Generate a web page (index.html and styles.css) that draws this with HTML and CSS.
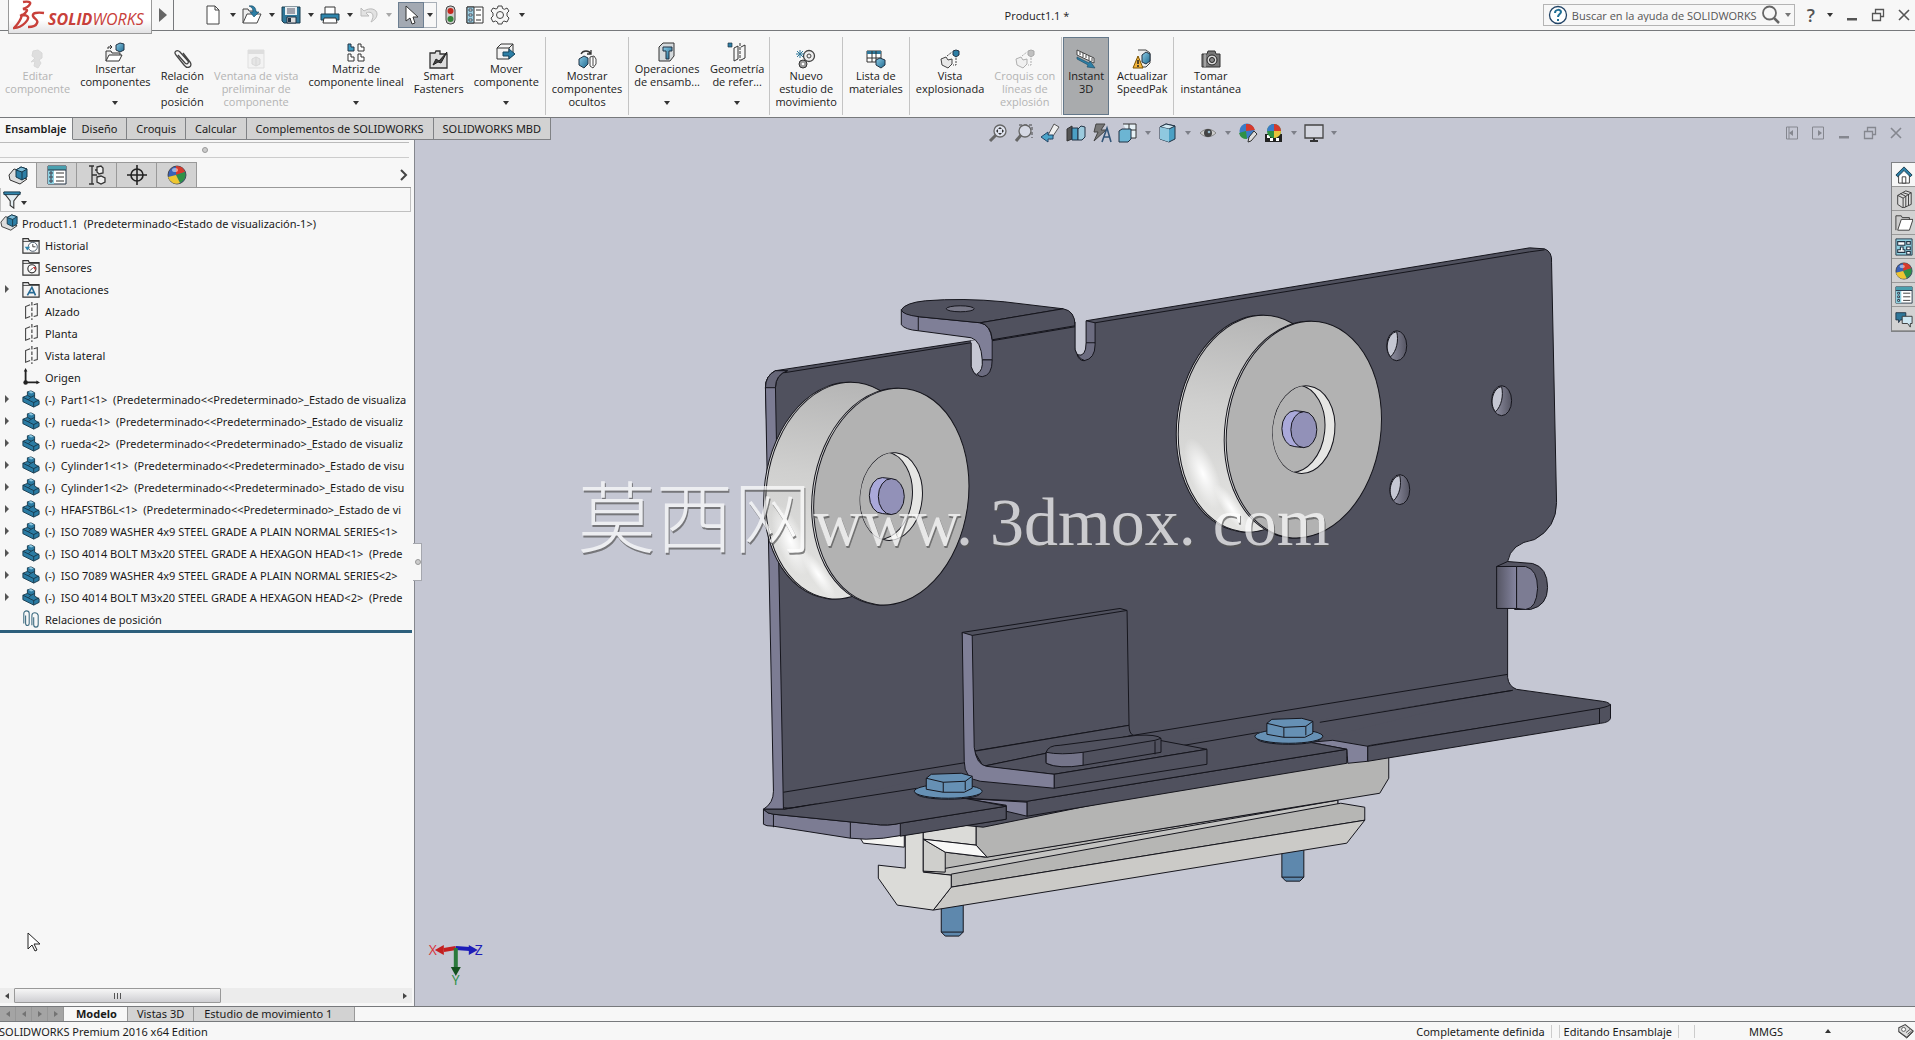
FILE: index.html
```html
<!DOCTYPE html>
<html lang="es">
<head>
    <meta charset="UTF-8">
    <meta name="viewport" content="width=device-width, initial-scale=1.0">
    <title>Product1.1 *</title>
    <link rel="stylesheet" href="styles.css">
</head>
<body>
    <svg class="sprite" width="0" height="0" aria-hidden="true">
        <defs>
            <linearGradient id="g-blue" x1="0" y1="0" x2="1" y2="1">
                <stop offset="0" stop-color="#8ccbe6"/><stop offset="1" stop-color="#1f6a90"/>
            </linearGradient>
            <symbol id="i-new" viewBox="0 0 20 20">
                <path d="M4 1h8l4 4v14H4z" fill="#fff" stroke="#444"/><path d="M12 1v4h4" fill="none" stroke="#444"/>
            </symbol>
            <symbol id="i-open" viewBox="0 0 20 20">
                <path d="M1 18V4h5l1 2h7v3" fill="#eee" stroke="#444"/><path d="M1 18l4-9h14l-4 9z" fill="#fff" stroke="#444"/>
                <path d="M7 1c5-1 7 2 7 6h3l-5 5-4-5h3c0-3-1-5-4-6z" fill="#2d7fa6" stroke="#17475f" stroke-width=".6"/>
            </symbol>
            <symbol id="i-save" viewBox="0 0 20 20">
                <path d="M1 2h18v16H3l-2-2z" fill="#2f7799" stroke="#1b3d4f"/><path d="M4 2h12v8H4z" fill="#e8eef1"/>
                <path d="M6 4h8M6 6h8M6 8h8" stroke="#556"/><path d="M6 12h9v6H6z" fill="#ddd" stroke="#234"/><path d="M7 13h3v4H7z" fill="#234"/>
            </symbol>
            <symbol id="i-print" viewBox="0 0 20 20">
                <path d="M5 9V2h10v7" fill="#fff" stroke="#333"/><path d="M1 9h18v6H1z" fill="#2f86ad" stroke="#1b3d4f"/>
                <path d="M4 13h12l1 5H3z" fill="#fff" stroke="#333"/>
            </symbol>
            <symbol id="i-undo" viewBox="0 0 20 20">
                <path d="M2 3v8h8L7 8c4-2 7 0 7 3 0 2-1 4-2 6 4-2 6-5 6-8 0-5-7-7-13-3z" fill="#e2e2e2" stroke="#bbb"/>
            </symbol>
            <symbol id="i-cursor" viewBox="0 0 20 20">
                <path d="M5 1v15l4-3 2 6 3-1-2-6h5z" fill="#fff" stroke="#333"/>
            </symbol>
            <symbol id="i-traffic" viewBox="0 0 20 20">
                <rect x="6" y="1" width="9" height="18" rx="4" fill="#ccc" stroke="#444"/><circle cx="10.500" cy="6" r="3" fill="#c4281e"/><circle cx="10.500" cy="14" r="3" fill="#35843a"/>
            </symbol>
            <symbol id="i-props" viewBox="0 0 20 20">
                <path d="M2 2h16v16H2z" fill="#fff" stroke="#333"/><path d="M2 2h7v16H2z" fill="#9fd0e4" stroke="#333"/>
                <path d="M4 4h3v2H4zM4 9h3v2H4zM4 14h3v2H4z" fill="#fff" stroke="#234" stroke-width=".8"/><path d="M11 5h5M11 10h5M11 15h5" stroke="#333"/>
            </symbol>
            <symbol id="i-gear" viewBox="0 0 20 20">
                <path d="M8 1h4l.5 2.500 2 .8L17 3l2 3-2 2v3l2 2-2 4-3-1-1.500 1L12 19H8l-.5-2-2-1L3 17l-2-4 2-2V8L1 6l2-3 3 1 1.500-.8z" fill="#f7f7f7" stroke="#444"/>
                <circle cx="10" cy="10" r="3.500" fill="none" stroke="#444"/>
            </symbol>
            <symbol id="i-help" viewBox="0 0 20 20">
                <circle cx="10" cy="10" r="8.500" fill="#fff" stroke="#246" stroke-width="1.300"/>
                <path d="M7 8c0-4 6-4 6-1 0 2-3 2-3 5M10 14v2" fill="none" stroke="#1f6f95" stroke-width="2"/>
            </symbol>
            <symbol id="i-search" viewBox="0 0 20 20">
                <circle cx="8.500" cy="8" r="6.500" fill="none" stroke="#666" stroke-width="1.800"/><path d="M13 13l5 5" stroke="#666" stroke-width="2.500"/>
            </symbol>
            <symbol id="i-min" viewBox="0 0 14 14"><path d="M2 10h10v2.500H2z" fill="currentColor"/></symbol>
            <symbol id="i-restore" viewBox="0 0 14 14">
                <path d="M4.500 5V1.500h8v7H9M1.500 5.500h8v7h-8z" fill="none" stroke="currentColor" stroke-width="1.300"/>
            </symbol>
            <symbol id="i-close" viewBox="0 0 14 14"><path d="M2 2l10 10M12 2L2 12" stroke="currentColor" stroke-width="1.600"/></symbol>
            <symbol id="i-paneleft" viewBox="0 0 14 14"><path d="M1.500 1h11v12h-11zM4 1v12" fill="none" stroke="currentColor"/><path d="M4 7l4-3v6z" fill="currentColor"/></symbol>
            <symbol id="i-paneright" viewBox="0 0 14 14"><path d="M1.500 1h11v12h-11z" fill="none" stroke="currentColor"/><path d="M11 7L7 4v6z" fill="currentColor"/></symbol>

            <symbol id="i-edit" viewBox="0 0 20 20">
                <path d="M5 2l5-1 4 3v5l-3 2 2 3-3 5-4-2 1-5-4 1 4-4-3-2z" fill="#bbb" stroke="#aaa"/>
            </symbol>
            <symbol id="i-insert" viewBox="0 0 20 20">
                <path d="M1 19V9h5l1 2h8v3" fill="#eee" stroke="#333"/><path d="M1 19l3-6h13l-3 6z" fill="#fff" stroke="#333"/>
                <path d="M11 3l4-2 4 1v6l-4 2-4-2z" fill="url(#g-blue)" stroke="#234"/><path d="M3 7V5h4M5 3l2 2-2 2" fill="none" stroke="#333"/>
            </symbol>
            <symbol id="i-clip" viewBox="0 0 20 20">
                <path d="M6 6l7 8c2 2 4 0 3-2L8 3C5 0 1 3 4 6l8 10c4 5 9 1 6-3L11 4" fill="none" stroke="#444" stroke-width="1.300"/>
            </symbol>
            <symbol id="i-window" viewBox="0 0 20 20">
                <path d="M2 1h16v18H2z" fill="#eee" stroke="#bbb"/><path d="M2 1h16v4H2z" fill="#bbb"/><path d="M6 10l4-2 4 2v5l-4 2-4-2zM10 8v9" fill="#ccc" stroke="#aaa"/>
            </symbol>
            <symbol id="i-pattern" viewBox="0 0 20 20">
                <path d="M2 2h3v3h3v4H2z" fill="#3f9dc4" stroke="#234"/>
                <path d="M12 2h3v3h3v4h-6zM2 12h3v3h3v4H2zM12 12h3v3h3v4h-6z" fill="#fff" stroke="#333"/>
            </symbol>
            <symbol id="i-smart" viewBox="0 0 20 20">
                <path d="M1 19V4h5l1-2h4v3h7v14z" fill="#ddd" stroke="#333" stroke-width="1.300"/><path d="M4 16l3-6 3 2 8-9-6 11-3-1z" fill="#444" stroke="#222"/>
            </symbol>
            <symbol id="i-move" viewBox="0 0 20 20">
                <path d="M1 6l4-4h12v11l-4 4H1z" fill="#f4f4f4" stroke="#333"/><path d="M1 6h12v11M13 6l4-4" fill="none" stroke="#333"/>
                <path d="M7 10h6V7l6 5-6 5v-3H7z" fill="#2d7fa6" stroke="#17475f"/>
            </symbol>
            <symbol id="i-show" viewBox="0 0 20 20">
                <path d="M4 5c2-4 8-4 10 0M14 1v4h-4" fill="none" stroke="#333" stroke-width="1.300"/>
                <path d="M2 10l5-3 4 2v6l-4 4-5-3z" fill="url(#g-blue)" stroke="#234"/><path d="M13 8l4-1 2 3v5l-3 4-3-2zM16 8v9" fill="#fff" stroke="#444"/>
            </symbol>
            <symbol id="i-ops" viewBox="0 0 20 20">
                <path d="M2 5l4-4h11v13l-4 5H2z" fill="#d5dadd" stroke="#333"/><path d="M6 5h9v4h-3v8H9V9H6z" fill="url(#g-blue)" stroke="#234"/>
            </symbol>
            <symbol id="i-geom" viewBox="0 0 20 20">
                <path d="M1 1h4v4H1z" fill="#2d7fa6" stroke="#234" stroke-width=".7"/><path d="M7 6l4-2v13l-4 2zM14 5l4-2v13l-4 2" fill="none" stroke="#333"/><path d="M13 1v18" stroke="#333" stroke-dasharray="3 1"/>
            </symbol>
            <symbol id="i-motion" viewBox="0 0 20 20">
                <circle cx="13" cy="7" r="5.500" fill="#eee" stroke="#444" stroke-width="1.300"/><circle cx="13" cy="7" r="2" fill="none" stroke="#444"/>
                <circle cx="7" cy="15" r="4" fill="#999" stroke="#333"/><circle cx="7" cy="15" r="1.300" fill="#fff"/><path d="M4 1v8M0 5h8M1 2l6 6M7 2L1 8" stroke="#2f7799"/>
            </symbol>
            <symbol id="i-list" viewBox="0 0 20 20">
                <path d="M1 2h14v11H1z" fill="#fff" stroke="#333"/><path d="M1 2h14v3H1z" fill="#2f7799"/><path d="M1 9h14M6 2v11M10 2v11" stroke="#333"/>
                <path d="M10 11l4-2 5 2v5l-4 3-5-3z" fill="url(#g-blue)" stroke="#234"/>
            </symbol>
            <symbol id="i-explode" viewBox="0 0 20 20">
                <path d="M1 10l5-2 2 3 4-1v5l-4 4-6-3z" fill="#e8e8e8" stroke="#444"/><path d="M13 2l3-1 3 1v4l-3 2-3-2z" fill="#2d7fa6" stroke="#234"/>
                <path d="M16 9v7h-3M7 7l5-4" fill="none" stroke="#444" stroke-dasharray="2 1"/>
            </symbol>
            <symbol id="i-instant" viewBox="0 0 20 20">
                <path d="M1 1l17 8v5L1 6z" fill="#fff" stroke="#444"/><path d="M4 3v3M7 4v4M10 6v3M13 7v4M16 9v3" stroke="#444"/>
                <path d="M1 8l12 6 1-2 5 7-8-1 1-2L1 10z" fill="#2d7fa6" stroke="#17475f" stroke-width=".6"/>
            </symbol>
            <symbol id="i-speed" viewBox="0 0 20 20">
                <path d="M6 1h8l4 3v10l-4 4H9" fill="#eee" stroke="#444"/><path d="M10 6l4-3 4 2v7l-4 3-4-2z" fill="url(#g-blue)" stroke="#234"/>
                <path d="M6 7l5 12H1z" fill="#f4b53c" stroke="#7a5200"/><path d="M6 11v4M6 16v2" stroke="#222" stroke-width="1.500"/>
            </symbol>
            <symbol id="i-camera" viewBox="0 0 20 20">
                <path d="M1 5h5l1-3h7l1 3h4v13H1z" fill="#777" stroke="#333"/><circle cx="11" cy="11" r="5" fill="#ddd" stroke="#222"/><circle cx="11" cy="11" r="2.500" fill="#888" stroke="#222"/><path d="M4 5v13" stroke="#ccc"/>
            </symbol>

            <symbol id="i-zoomfit" viewBox="0 0 20 20">
                <path d="M8 12l-6 6" stroke="#666" stroke-width="3"/><circle cx="12" cy="8" r="6" fill="#dfe3ee" stroke="#666" stroke-width="1.300"/><path d="M12 4l2 2h-4zM12 12l2-2h-4zM8 8l2-2v4zM16 8l-2-2v4z" fill="#333"/>
            </symbol>
            <symbol id="i-zoomarea" viewBox="0 0 20 20">
                <path d="M5 2h13v13" fill="none" stroke="#444" stroke-dasharray="3 2"/><circle cx="11" cy="8" r="6" fill="#d6d9e4" stroke="#666" stroke-width="1.300"/><path d="M7 12l-5 6" stroke="#666" stroke-width="3"/>
            </symbol>
            <symbol id="i-prev" viewBox="0 0 20 20">
                <path d="M14 1l5 3-8 12-4-2z" fill="#eee" stroke="#555"/><path d="M1 14l7-5v3h5v4H8v3z" fill="#4aa3c9" stroke="#246"/>
            </symbol>
            <symbol id="i-section" viewBox="0 0 20 20">
                <path d="M1 6l5-3v13l-5 2z" fill="#555" stroke="#333"/><path d="M6 5h6v12H6z" fill="#4ba0c4" stroke="#234"/><path d="M12 6l3-3 4 1v10l-3 3h-4z" fill="#9ccadd" stroke="#234"/>
            </symbol>
            <symbol id="i-dynamic" viewBox="0 0 20 20">
                <path d="M4 1h9L9 7h5L2 18l4-9H2z" fill="#777" stroke="#444"/><path d="M10 19l5-14 4 14M12 14h6" fill="none" stroke="#357" stroke-width="1.600"/>
            </symbol>
            <symbol id="i-orient" viewBox="0 0 20 20">
                <path d="M5 1h13v14h-5M11 1v6M5 7h13" fill="#e6f1f6" stroke="#333"/><path d="M1 8l3-2h9v10l-3 3H1z" fill="#6cb5d3" stroke="#234"/>
            </symbol>
            <symbol id="i-style" viewBox="0 0 20 20">
                <path d="M2 4l6-3 9 2v13l-6 3-9-3z" fill="#4ba0c4" stroke="#234"/><path d="M2 4l9 2 6-3-9-2z" fill="#cfe8f2" stroke="#234"/><path d="M2 4l9 2v13l-9-3z" fill="#8fc8df"/>
            </symbol>
            <symbol id="i-eye" viewBox="0 0 20 20">
                <path d="M2 10c5-5 11-5 16 0-5 5-11 5-16 0z" fill="#ccc" stroke="#888"/><circle cx="10" cy="10" r="4" fill="#444"/><circle cx="11" cy="9" r="1.300" fill="#9bc"/>
            </symbol>
            <symbol id="i-ball" viewBox="0 0 20 20">
                <circle cx="10" cy="10" r="9" fill="#3a62b8" stroke="#333" stroke-width=".8"/><path d="M9 10V1a9 9 0 0 1 9 6z" fill="#d63a2c"/>
                <path d="M9 10l9-3a9 9 0 0 1-5 11z" fill="#2f9145"/><path d="M9 10l4 8a9 9 0 0 1-12-6z" fill="#eec631"/><ellipse cx="8" cy="5" rx="3" ry="2" fill="#fff" opacity=".5"/>
            </symbol>
            <symbol id="i-ballpen" viewBox="0 0 20 20">
                <circle cx="9" cy="8" r="7.500" fill="#3a7cc8"/><path d="M8 8V1a8 8 0 0 1 9 6z" fill="#d63a2c"/><path d="M8 8l-7 2a8 8 0 0 0 8 6z" fill="#2f9145"/><path d="M11 14l5-6 3 3-6 7-3 1z" fill="#ddd" stroke="#333"/>
            </symbol>
            <symbol id="i-scene" viewBox="0 0 20 20">
                <path d="M1 11h17v8H1z" fill="#222"/><path d="M3 12h3v3H3zM6 15h3v3H6zM12 15h3v3h-3z" fill="#fff"/>
                <circle cx="10" cy="8" r="7" fill="#2f9145"/><path d="M10 8V1a7 7 0 0 1 7 7z" fill="#d63a2c"/><path d="M10 8h7a7 7 0 0 1-7 7z" fill="#e8c23a"/><path d="M10 8V1a7 7 0 0 0-7 7z" fill="#3a7cc8"/>
            </symbol>
            <symbol id="i-monitor" viewBox="0 0 20 20">
                <path d="M1 2h18v13H1z" fill="#d4d6df" stroke="#444" stroke-width="1.300"/><path d="M10 15v3M6 18h8" stroke="#333" stroke-width="2"/>
            </symbol>

            <symbol id="i-asm" viewBox="0 0 20 20">
                <path d="M1 9l5-6 4 1v6l9 3-7 5-10-4z" fill="#ddd" stroke="#333"/><path d="M8 4l5-3 6 2v8l-5 3-6-3z" fill="#2d7fa6" stroke="#17384a"/><path d="M8 4l6 2 5-3-6-2z" fill="#7dbcd8" stroke="#17384a"/><path d="M14 6v8" stroke="#17384a"/>
            </symbol>
            <symbol id="i-config" viewBox="0 0 20 20">
                <path d="M5 1v18M2 1h5M2 19h5M5 10h5M8 5h4" fill="none" stroke="#333" stroke-width="1.300"/>
                <path d="M10 2l4-1 2 2v5l-4 1-2-2zM10 12l4-1 4 2v4l-4 2-4-2z" fill="#eee" stroke="#333" stroke-width="1.300"/>
            </symbol>
            <symbol id="i-target" viewBox="0 0 20 20">
                <circle cx="10" cy="10" r="6" fill="none" stroke="#222" stroke-width="1.600"/><path d="M10 0v20M0 10h20" stroke="#222" stroke-width="1.600"/>
            </symbol>
            <symbol id="i-funnel" viewBox="0 0 20 20">
                <path d="M1 2h18l-7 9v8l-4-3v-5z" fill="#e4eef2" stroke="#333" stroke-width="1.200"/><path d="M1 1h18v3H1z" fill="#2f86ad" stroke="#17384a"/>
            </symbol>
            <symbol id="i-folder" viewBox="0 0 20 20">
                <path d="M1 19V3h6l1 2h11v14z" fill="#f4f4f4" stroke="#333" stroke-width="1.300"/><path d="M1 6h18" stroke="#333"/>
            </symbol>
            <symbol id="i-history" viewBox="0 0 20 20">
                <use href="#i-folder"/><circle cx="12" cy="12" r="5" fill="#fff" stroke="#456"/><path d="M12 9v3h3" fill="none" stroke="#333"/><path d="M3 12h6l-3 4z" fill="#2f86ad"/>
            </symbol>
            <symbol id="i-sensor" viewBox="0 0 20 20">
                <use href="#i-folder"/><circle cx="11" cy="12" r="4.500" fill="#fff" stroke="#333" stroke-width="1.300"/><path d="M9 14l3-3" stroke="#333"/><path d="M12 10h3v4z" fill="#c33"/>
            </symbol>
            <symbol id="i-annot" viewBox="0 0 20 20">
                <use href="#i-folder"/><path d="M6 17l5-9 4 9M8 14h6" fill="none" stroke="#276a94" stroke-width="1.800"/>
            </symbol>
            <symbol id="i-plane" viewBox="0 0 20 20">
                <path d="M9 3L4 5v13l5-2M13 3l4-1v13l-4 1" fill="none" stroke="#444" stroke-width="1.200"/><path d="M11 0v20" stroke="#333" stroke-width="1.200" stroke-dasharray="4 2"/>
            </symbol>
            <symbol id="i-origin" viewBox="0 0 20 20">
                <path d="M4 3v13h13" fill="none" stroke="#222" stroke-width="2"/><path d="M4 0l2 4H2zM20 16l-4-2v4z" fill="#222"/><circle cx="4" cy="16" r="2.500" fill="#222"/>
            </symbol>
            <symbol id="i-part" viewBox="0 0 20 20">
                <path d="M1 8l5-2V2l4-1 4 2v6l5 3v4l-6 3-12-6z" fill="#2a7ba3" stroke="#17384a"/><path d="M1 8l6 3 6 3v5M13 14l6-3M6 6l4 2 4-2M7 11l3-3" fill="none" stroke="#17384a"/><path d="M7 2l3-1 3 2-3 1z" fill="#8cc7e0"/>
            </symbol>
            <symbol id="i-mates" viewBox="0 0 20 20">
                <path d="M2 15V4c0-4 6-4 6 0v11c0 3-4 3-4 0V6M11 17V6c0-4 6-4 7 0v10c0 4-5 4-5 0V8" fill="none" stroke="#3d6b80" stroke-width="1.200"/>
            </symbol>
            <symbol id="i-home" viewBox="0 0 20 20">
                <path d="M4 9v10h12V9" fill="#fff" stroke="#333"/><path d="M10 1l9 9-2 2-7-7-7 7-2-2z" fill="#2d7fa6" stroke="#17384a"/><path d="M8 12h4v7H8z" fill="#fff" stroke="#333"/>
            </symbol>
            <symbol id="i-books" viewBox="0 0 20 20">
                <path d="M3 6l9-5 6 2v13l-9 4-6-4zM3 6l6 3 9-6M9 9v11M6 4l6 3v12M9 3l6 2v12" fill="#ddd" stroke="#333"/>
            </symbol>
            <symbol id="i-folderopen" viewBox="0 0 20 20">
                <path d="M1 18V2h6l1 2h8v3" fill="#ccc" stroke="#333"/><path d="M3 18L7 6h13l-4 12z" fill="#fff" stroke="#333"/>
            </symbol>
            <symbol id="i-palette" viewBox="0 0 20 20">
                <path d="M1 1h18v18H1z" fill="#8fd0e0" stroke="#234"/><path d="M3 4h8v4H3zM13 4h4v3h-4zM13 10h4v3h-4zM13 15h4v3h-4zM3 16h8v-3H9v-3H6v3H3z" fill="#fff" stroke="#234" stroke-width="1.200"/>
            </symbol>
            <symbol id="i-form" viewBox="0 0 20 20">
                <path d="M1 1h18v18H1z" fill="#fff" stroke="#234"/><path d="M1 1h18v4H1z" fill="#4a9fae"/><path d="M1 5h6v14H1z" fill="#8fd0e0"/>
                <path d="M3 7h2v2H3zM3 11h2v2H3zM3 15h2v2H3zM1 5h18" fill="#fff" stroke="#234"/><path d="M9 8h8M9 12h8M9 16h8" stroke="#333"/>
            </symbol>
            <symbol id="i-chat" viewBox="0 0 20 20">
                <path d="M1 3h11v8H6l-2 3v-3H1z" fill="#2f7799" stroke="#234"/><path d="M8 7h11v8h-2v4l-3-4H8z" fill="#cfe8f2" stroke="#333"/>
            </symbol>
            <symbol id="i-tag" viewBox="0 0 20 20">
                <path d="M1 6l8-4 10 8-8 8-10-7z" fill="#ddd" stroke="#444" stroke-width="1.300"/><circle cx="7" cy="8" r="2.500" fill="#fff" stroke="#444"/><path d="M10 12l5-4M12 14l5-4M1 11l10 8 8-8" fill="none" stroke="#444"/>
            </symbol>
        </defs>
    </svg>

    <header class="titlebar">
        <div class="logo">
            <svg class="logo-mark" viewBox="0 0 32 30" aria-hidden="true">
                <path d="M10 2c5-1 8 0 7 2-1 2-4 4-7 5 4 0 5 1 3 3-1 2-3 3-6 4M1 28c4-4 7-9 8-13 7 0 8 3 3 8-3 3-7 5-11 5zM31 13c-7-1-12 0-11 3 1 3 6 4 4 7-1 3-5 4-9 4" fill="none" stroke="#c8403a" stroke-width="2.400"/>
            </svg>
            <span class="logo-text"><b>SOLID</b>WORKS</span>
        </div>
        <button class="menu-open" aria-label="Menú"><i class="tri-right"></i></button>
        <div class="quick">
            <button aria-label="Nuevo"><svg class="icon"><use href="#i-new"/></svg></button><button class="more" aria-label="Más"><i class="tri"></i></button>
            <button aria-label="Abrir"><svg class="icon"><use href="#i-open"/></svg></button><button class="more" aria-label="Más"><i class="tri"></i></button>
            <button aria-label="Guardar"><svg class="icon"><use href="#i-save"/></svg></button><button class="more" aria-label="Más"><i class="tri"></i></button>
            <button aria-label="Imprimir"><svg class="icon"><use href="#i-print"/></svg></button><button class="more" aria-label="Más"><i class="tri"></i></button>
            <button aria-label="Deshacer" disabled><svg class="icon"><use href="#i-undo"/></svg></button><button class="more" aria-label="Más" disabled><i class="tri"></i></button>
            <button class="pick" aria-label="Seleccionar"><svg class="icon"><use href="#i-cursor"/></svg></button><button class="pick-more" aria-label="Más"><i class="tri"></i></button>
            <button class="wide" aria-label="Reconstruir"><svg class="icon"><use href="#i-traffic"/></svg></button>
            <button class="wide" aria-label="Propiedades"><svg class="icon"><use href="#i-props"/></svg></button>
            <button class="wide" aria-label="Opciones"><svg class="icon"><use href="#i-gear"/></svg></button><button class="more" aria-label="Más"><i class="tri"></i></button>
        </div>
        <h1 class="doc-title">Product1.1 *</h1>
        <div class="search">
            <svg class="icon"><use href="#i-help"/></svg>
            <input type="text" placeholder="Buscar en la ayuda de SOLIDWORKS" aria-label="Buscar en la ayuda de SOLIDWORKS">
            <button aria-label="Buscar"><svg class="icon"><use href="#i-search"/></svg></button>
            <button aria-label="Más"><i class="tri"></i></button>
        </div>
        <div class="win-controls">
            <button class="help">?</button>
            <button aria-label="Más"><i class="tri"></i></button>
            <button aria-label="Minimizar"><svg class="icon-sm"><use href="#i-min"/></svg></button>
            <button aria-label="Restaurar"><svg class="icon-sm"><use href="#i-restore"/></svg></button>
            <button aria-label="Cerrar"><svg class="icon-sm"><use href="#i-close"/></svg></button>
        </div>
    </header>

    <div class="ribbon">
        <div class="group">
            <button class="cmd" disabled><svg class="icon"><use href="#i-edit"/></svg><span>Editar<br>componente</span></button>
            <button class="cmd drop"><svg class="icon"><use href="#i-insert"/></svg><span>Insertar<br>componentes</span><i class="tri"></i></button>
            <button class="cmd"><svg class="icon"><use href="#i-clip"/></svg><span>Relación<br>de<br>posición</span></button>
            <button class="cmd" disabled><svg class="icon"><use href="#i-window"/></svg><span>Ventana de vista<br>preliminar de<br>componente</span></button>
            <button class="cmd drop"><svg class="icon"><use href="#i-pattern"/></svg><span>Matriz de<br>componente lineal</span><i class="tri"></i></button>
            <button class="cmd"><svg class="icon"><use href="#i-smart"/></svg><span>Smart<br>Fasteners</span></button>
            <button class="cmd drop"><svg class="icon"><use href="#i-move"/></svg><span>Mover<br>componente</span><i class="tri"></i></button>
        </div>
        <div class="group">
            <button class="cmd"><svg class="icon"><use href="#i-show"/></svg><span>Mostrar<br>componentes<br>ocultos</span></button>
        </div>
        <div class="group snug">
            <button class="cmd drop"><svg class="icon"><use href="#i-ops"/></svg><span>Operaciones<br>de ensamb...</span><i class="tri"></i></button>
            <button class="cmd drop"><svg class="icon"><use href="#i-geom"/></svg><span>Geometría<br>de refer...</span><i class="tri"></i></button>
        </div>
        <div class="group snug">
            <button class="cmd"><svg class="icon"><use href="#i-motion"/></svg><span>Nuevo<br>estudio de<br>movimiento</span></button>
        </div>
        <div class="group">
            <button class="cmd"><svg class="icon"><use href="#i-list"/></svg><span>Lista de<br>materiales</span></button>
        </div>
        <div class="group">
            <button class="cmd"><svg class="icon"><use href="#i-explode"/></svg><span>Vista<br>explosionada</span></button>
            <button class="cmd" disabled><svg class="icon"><use href="#i-explode"/></svg><span>Croquis con<br>líneas de<br>explosión</span></button>
        </div>
        <div class="group wide">
            <button class="cmd pressed"><svg class="icon"><use href="#i-instant"/></svg><span>Instant<br>3D</span></button>
            <button class="cmd"><svg class="icon"><use href="#i-speed"/></svg><span>Actualizar<br>SpeedPak</span></button>
        </div>
        <div class="group last">
            <button class="cmd"><svg class="icon"><use href="#i-camera"/></svg><span>Tomar<br>instantánea</span></button>
        </div>
    </div>

    <main class="workspace">
        <nav class="cmd-tabs">
            <button class="active">Ensamblaje</button>
            <button>Diseño</button>
            <button>Croquis</button>
            <button>Calcular</button>
            <button>Complementos de SOLIDWORKS</button>
            <button>SOLIDWORKS MBD</button>
        </nav>

        <aside class="panel">
            <div class="splitter"><i class="knob"></i></div>
            <div class="panel-tabs">
                <button class="active" aria-label="Árbol de operaciones"><svg class="icon"><use href="#i-asm"/></svg></button>
                <button aria-label="Propiedades"><svg class="icon"><use href="#i-form"/></svg></button>
                <button aria-label="Configuraciones"><svg class="icon"><use href="#i-config"/></svg></button>
                <button aria-label="Cotas"><svg class="icon"><use href="#i-target"/></svg></button>
                <button aria-label="Apariencias"><svg class="icon"><use href="#i-ball"/></svg></button>
                <button class="expand" aria-label="Expandir"><svg class="icon-sm" viewBox="0 0 14 14"><path d="M5 2l5 5-5 5" fill="none" stroke="#444" stroke-width="2"/></svg></button>
            </div>
            <div class="filter"><svg class="icon"><use href="#i-funnel"/></svg><i class="tri"></i></div>
            <ul class="tree">
                <li class="root"><svg class="icon"><use href="#i-asm"/></svg>Product1.1&nbsp; (Predeterminado&lt;Estado de visualización-1&gt;)</li>
                <li><svg class="icon"><use href="#i-history"/></svg>Historial</li>
                <li><svg class="icon"><use href="#i-sensor"/></svg>Sensores</li>
                <li class="has-kids"><svg class="icon"><use href="#i-annot"/></svg>Anotaciones</li>
                <li><svg class="icon"><use href="#i-plane"/></svg>Alzado</li>
                <li><svg class="icon"><use href="#i-plane"/></svg>Planta</li>
                <li><svg class="icon"><use href="#i-plane"/></svg>Vista lateral</li>
                <li><svg class="icon"><use href="#i-origin"/></svg>Origen</li>
                <li class="has-kids"><svg class="icon"><use href="#i-part"/></svg>(-)&nbsp; Part1&lt;1&gt;&nbsp; (Predeterminado&lt;&lt;Predeterminado&gt;_Estado de visualiza</li>
                <li class="has-kids"><svg class="icon"><use href="#i-part"/></svg>(-)&nbsp; rueda&lt;1&gt;&nbsp; (Predeterminado&lt;&lt;Predeterminado&gt;_Estado de visualiz</li>
                <li class="has-kids"><svg class="icon"><use href="#i-part"/></svg>(-)&nbsp; rueda&lt;2&gt;&nbsp; (Predeterminado&lt;&lt;Predeterminado&gt;_Estado de visualiz</li>
                <li class="has-kids"><svg class="icon"><use href="#i-part"/></svg>(-)&nbsp; Cylinder1&lt;1&gt;&nbsp; (Predeterminado&lt;&lt;Predeterminado&gt;_Estado de visu</li>
                <li class="has-kids"><svg class="icon"><use href="#i-part"/></svg>(-)&nbsp; Cylinder1&lt;2&gt;&nbsp; (Predeterminado&lt;&lt;Predeterminado&gt;_Estado de visu</li>
                <li class="has-kids"><svg class="icon"><use href="#i-part"/></svg>(-)&nbsp; HFAFSTB6L&lt;1&gt;&nbsp; (Predeterminado&lt;&lt;Predeterminado&gt;_Estado de vi</li>
                <li class="has-kids"><svg class="icon"><use href="#i-part"/></svg>(-)&nbsp; ISO 7089 WASHER 4x9 STEEL GRADE A PLAIN NORMAL SERIES&lt;1&gt;</li>
                <li class="has-kids"><svg class="icon"><use href="#i-part"/></svg>(-)&nbsp; ISO 4014 BOLT M3x20 STEEL GRADE A HEXAGON HEAD&lt;1&gt;&nbsp; (Prede</li>
                <li class="has-kids"><svg class="icon"><use href="#i-part"/></svg>(-)&nbsp; ISO 7089 WASHER 4x9 STEEL GRADE A PLAIN NORMAL SERIES&lt;2&gt;</li>
                <li class="has-kids"><svg class="icon"><use href="#i-part"/></svg>(-)&nbsp; ISO 4014 BOLT M3x20 STEEL GRADE A HEXAGON HEAD&lt;2&gt;&nbsp; (Prede</li>
                <li><svg class="icon"><use href="#i-mates"/></svg>Relaciones de posición</li>
            </ul>
            <div class="hscroll">
                <button aria-label="Izquierda"><i class="tri-left"></i></button>
                <div class="track"><div class="thumb"><i></i><i></i><i></i></div></div>
                <button aria-label="Derecha"><i class="tri-right"></i></button>
            </div>
            <div class="handle"><i class="knob"></i></div>
            <svg class="pointer" viewBox="0 0 14 20" aria-hidden="true"><path d="M1 1v16l4-4 3 6 2-1-3-6h6z" fill="#fff" stroke="#222"/></svg>
        </aside>

        <section class="viewport">
            <svg class="model" viewBox="415 118 1500 889" aria-label="Product1.1">
                <defs>
                    <linearGradient id="g-groove" x1="0" y1="0" x2="0" y2="1">
                        <stop offset="0" stop-color="#b5b5b5"/><stop offset=".45" stop-color="#d0d0cf"/><stop offset="1" stop-color="#e4e4e2"/>
                    </linearGradient>
                    <radialGradient id="g-shine">
                        <stop offset="0" stop-color="#fff"/><stop offset="1" stop-color="#fff" stop-opacity="0"/>
                    </radialGradient>
                    <linearGradient id="g-bend">
                        <stop offset="0" stop-color="#555563"/><stop offset="1" stop-color="#8585a0"/>
                    </linearGradient>
                    <linearGradient id="g-corner">
                        <stop offset="0" stop-color="#9a9aad"/><stop offset="1" stop-color="#555563"/>
                    </linearGradient>
                    <clipPath id="hub"><ellipse cx="891" cy="496" rx="31" ry="44" transform="rotate(6 891 496)"/></clipPath>
                    <g id="wheel">
                        <ellipse cx="841" cy="490" rx="77" ry="109" transform="rotate(8 841 490)" fill="#ddd"/>
                        <ellipse cx="843" cy="490" rx="77" ry="109" transform="rotate(8 843 490)" fill="url(#g-groove)"/>
                        <g stroke="none">
                            <ellipse cx="790" cy="540" rx="14" ry="38" transform="rotate(-22 790 540)" fill="url(#g-shine)"/>
                            <ellipse cx="818" cy="574" rx="8" ry="28" transform="rotate(-34 818 574)" fill="url(#g-shine)"/>
                        </g>
                        <ellipse cx="889" cy="496" rx="77" ry="109" transform="rotate(8 889 496)" fill="#ddd"/>
                        <ellipse cx="891" cy="496" rx="77" ry="109" transform="rotate(8 891 496)" fill="#b2b2b2"/>
                        <ellipse cx="891" cy="496" rx="31" ry="44" transform="rotate(6 891 496)" fill="#e6e6e4"/>
                        <g clip-path="url(#hub)"><ellipse cx="881" cy="495" rx="31" ry="44" transform="rotate(6 881 495)" fill="#b2b2b2"/></g>
                        <path d="M882 477a13 18 0 0 0 0 36l9 1v-36z" fill="#aaa9da"/>
                        <ellipse cx="891" cy="496" rx="13" ry="18" fill="#9291b8"/>
                    </g>
                    <g id="hole">
                        <ellipse cx="1397" cy="346" rx="10" ry="15" fill="url(#g-corner)"/>
                        <path d="M1397 332c-9 1-13 18-6 25 6-6 8-16 6-25z" fill="#c5c7d3"/>
                    </g>
                    <g id="bolt">
                        <ellipse cx="948" cy="793" rx="32" ry="6" fill="#4f7799"/>
                        <ellipse cx="948" cy="791" rx="34" ry="7" fill="#6690b4"/>
                        <path d="M926 778l5-4 30-1 11 3v12l-8 4h-21l-17-3z" fill="#6690b4"/>
                        <path d="M926 778l17 4 22-1 7-5M943 782v10M965 781v9" fill="none"/>
                    </g>
                </defs>

                <!-- bolt shanks -->
                <path d="M941 900v33l4 4h14l4-4v-33z" fill="#5e88ad" class="edge"/>
                <path d="M1282 845v33l4 4h14l4-4v-33z" fill="#5e88ad" class="edge"/>
                <path d="M941 933h22M1282 878h22" class="edge"/>

                <!-- rail -->
                <g class="edge">
                    <path d="M860 839l3 5 41 4v-12z" fill="#f4f4f2"/>
                    <path d="M945 853l40 5 353-57v7l-387 68-28-3z" fill="#b9b9b7"/>
                    <path d="M923 873l415-72v6l-387 69z" fill="#c4c4c2"/>
                    <path d="M951 875l390-71 24 4v13l-414 67z" fill="#b6b6b4"/>
                    <path d="M951 888l414-67-18 23-414 67z" fill="#cbcac7"/>
                    <path d="M905 830h18v43l28 3v12l-18 23-36-5-19-27v-13l27 3z" fill="#dbdbd8"/>
                    <path d="M923 840l22 13v20l-22-1z" fill="#cfcfcc"/>
                    <path d="M923 830l53-8v24l-53-6z" fill="#dbdbd8"/>
                    <path d="M923 840l53 6 11 12-42-5z" fill="#f8f8f7"/>
                    <path d="M976 820l371-62 42-4v25l-9 15-393 64-11-12z" fill="#b4b4b3"/>
                </g>

                <!-- main plate -->
                <g class="edge">
                    <path d="M765 388q0-12 10-17l196-30 21-1 83-17 11-2 444-73 15 1q8 3 7 14l5 240q0 25-22 37-24 4-27 22v116q1 9 9 12l86 12q9 1 8 6l-240 38-24 8L983 828 779 808z" fill="#50515e"/>
                    <path d="M765 388q0-12 10-17l12 0q-12 4-12 17l8 422-20 0q10-6 10-18z" fill="#7c7c93"/>
                    <path d="M765 388q0-12 10-17h12q-12 4-12 17z" fill="#666678"/>
                    <path d="M784 373l187-30M992 341l83-14M1095 323l435-71 15-2" fill="none"/>
                    <path d="M783 793l725-118M783 810l730-119" fill="none"/>
                </g>

                <!-- lower flange, three parts split by two reliefs -->
                <g class="edge">
                    <path d="M962 799l65 4v14l-21-5 0-6z" fill="#82829a"/>
                    <path d="M763 810q5 5 10 5l100 10q15 2 27-1l106-17v13l-123 19q-18 2-33 0l-77-12q-8 0-10-2z" fill="#7c7c93"/>
                    <path d="M900 824l106-17v13l-106 17z" fill="#50515e"/>
                    <path d="M763 810l20 0 134-20 89 17-106 17q-12 3-27 1l-100-10q-6 0-10-5z" fill="#50515e"/>
                    <path d="M773 815v13M850 823v16" fill="none"/>
                    <path d="M1310 743l23-2 35 6v15l-20 2-1-14z" fill="#82829a"/>
                    <path d="M1027 802l320-52v14l-320 53z" fill="#50515e"/>
                    <path d="M1368 747l232-38q10-2 11-4v14q-1 4-10 5l-233 38z" fill="#50515e"/>
                    <path d="M1600 709v15" fill="none"/>
                </g>
                <path d="M787 811l128-19 48 5 65 5 318-52-36-8 202-50-400 60-200 30z" fill="#50515e"/>
                <path class="edge" d="M783 810l134-21M1320 723l193-32M962 799l65 3 320-52-37-7M1184 746l76-13" fill="none"/>

                <!-- bent lug on the top edge -->
                <g class="edge">
                    <path d="M971 341l11-2 10 3v18h-21z" class="sky"/>
                    <path d="M971 341v25q2 9 8 9 4-3 3-15V345z" class="sky"/>
                    <path d="M982 360h10q0 16-10 17-4 0-5-3 6-3 5-14z" fill="#6c6c80"/>
                    <path d="M901 310v15q4 5 17 6l53 7q10 3 11 22h10v-20q-2-15-12-17l-61-6z" fill="#7f7f97"/>
                    <path d="M901 310q4-7 24-9 38-3 79 1l59 7-83 14-61-6q-17-2-18-7z" fill="#50515e"/>
                    <path d="M980 323l83-14q12 2 12 17l-83 14q-1-15-12-17z" fill="#50515e"/>
                    <path d="M918 317v14" fill="none"/>
                    <ellipse cx="960" cy="309" rx="14" ry="3" fill="#777786"/>
                </g>
                <path d="M1075 318v30q2 9 7 9 5-3 4-14v-25z" class="sky"/>
                <g class="edge">
                    <path d="M1086 321l9 2v22q0 14-11 16-5 0-7-6 9 3 9-12z" fill="#6c6c80"/>
                    <path d="M1075 322v28q3 9 10 11M1086 343h9M971 343v24q2 7 6 9" fill="none"/>
                </g>

                <!-- side lug -->
                <g class="edge">
                    <path d="M1497 567l11-5 25 2q15 4 15 24 0 18-17 22h-16z" fill="#555563"/>
                    <path d="M1497 567h20v42h-20z" fill="url(#g-bend)"/>
                    <path d="M1517 567h9q12 3 12 22-1 20-12 21l-9-1z" fill="#7c7c93"/>
                </g>

                <g class="edge">
                    <use href="#hole"/>
                    <use href="#hole" x="105" y="55"/>
                    <use href="#hole" x="3" y="144"/>
                    <use href="#wheel" y="1"/>
                    <use href="#wheel" x="413" y="-66"/>
                </g>

                <!-- inner angle bracket with slotted bar -->
                <g class="edge">
                    <path d="M962 633l158-24 7 2 2 115-157 26z" fill="#50515e"/>
                    <path d="M974 752l155-26q0 8 4 10l-150 31z" fill="#50515e"/>
                    <path d="M983 767l150-31 74 14-153 25z" fill="#50515e"/>
                    <path d="M1054 775l153-25v15l-153 24z" fill="#50515e"/>
                    <path d="M962 633l10 3 2 112q2 17 12 19l68 8v14l-74-7q-16-2-16-20z" fill="#7f7f97"/>
                    <path d="M972 636l155-25" fill="none"/>
                    <path d="M1046 753q2-7 14-7l77-10q20-1 24 3v14l-78 13-22 1q-14-1-15-4z" fill="#50515e"/>
                    <path d="M1046 753q14 3 37 0v13q-24 4-37-2z" fill="#747489"/>
                    <path d="M1083 753l72-12 6-2M1155 742v13" fill="none"/>
                    <use href="#bolt" y="1"/>
                    <use href="#bolt" x="341" y="-54"/>
                </g>

                <!-- axes -->
                <g class="axes">
                    <path d="M455 949l-12 2" stroke="#c41f1f" stroke-width="4"/><path d="M434 951l9-5v10z" fill="#c41f1f"/>
                    <path d="M455 949l14 1" stroke="#1c1cb8" stroke-width="4"/><path d="M477 951l-9-5v10z" fill="#1c1cb8"/>
                    <path d="M455 949v22" stroke="#2b7a3c" stroke-width="4"/><path d="M455 977l-5-9h10z" fill="#14521f"/>
                    <text x="428" y="956" fill="#d8343c">X</text><text x="474" y="956" fill="#1c1cb8">Z</text><text x="451" y="986" fill="#2f9147">Y</text>
                </g>

                <g class="watermark">
                    <text x="577" y="547" class="wm-cjk">莫西网</text>
                    <text x="813" y="545" class="wm-latin">www. 3dmox. com</text>
                </g>
            </svg>

            <div class="hud">
                <button aria-label="Zoom para ajustar"><svg class="icon"><use href="#i-zoomfit"/></svg></button>
                <button aria-label="Zoom encuadre"><svg class="icon"><use href="#i-zoomarea"/></svg></button>
                <button aria-label="Vista previa"><svg class="icon"><use href="#i-prev"/></svg></button>
                <button aria-label="Vista de sección"><svg class="icon"><use href="#i-section"/></svg></button>
                <button aria-label="Anotaciones dinámicas"><svg class="icon"><use href="#i-dynamic"/></svg></button>
                <button aria-label="Orientación"><svg class="icon"><use href="#i-orient"/></svg></button><i class="tri"></i>
                <button aria-label="Visualización"><svg class="icon"><use href="#i-style"/></svg></button><i class="tri"></i>
                <button aria-label="Ocultar"><svg class="icon"><use href="#i-eye"/></svg></button><i class="tri"></i>
                <button aria-label="Apariencia"><svg class="icon"><use href="#i-ballpen"/></svg></button>
                <button aria-label="Escena"><svg class="icon"><use href="#i-scene"/></svg></button><i class="tri"></i>
                <button aria-label="Ver"><svg class="icon"><use href="#i-monitor"/></svg></button><i class="tri"></i>
            </div>
            <div class="doc-controls">
                <button aria-label="Panel izquierdo"><svg class="icon-sm"><use href="#i-paneleft"/></svg></button>
                <button aria-label="Panel derecho"><svg class="icon-sm"><use href="#i-paneright"/></svg></button>
                <button aria-label="Minimizar"><svg class="icon-sm"><use href="#i-min"/></svg></button>
                <button aria-label="Restaurar"><svg class="icon-sm"><use href="#i-restore"/></svg></button>
                <button aria-label="Cerrar"><svg class="icon-sm"><use href="#i-close"/></svg></button>
            </div>
            <div class="taskpane">
                <button class="active" aria-label="Recursos"><svg class="icon"><use href="#i-home"/></svg></button>
                <button aria-label="Biblioteca"><svg class="icon"><use href="#i-books"/></svg></button>
                <button aria-label="Explorador"><svg class="icon"><use href="#i-folderopen"/></svg></button>
                <button aria-label="Paleta"><svg class="icon"><use href="#i-palette"/></svg></button>
                <button aria-label="Apariencias"><svg class="icon"><use href="#i-ball"/></svg></button>
                <button aria-label="Propiedades"><svg class="icon"><use href="#i-form"/></svg></button>
                <button aria-label="Foro"><svg class="icon"><use href="#i-chat"/></svg></button>
            </div>
        </section>
    </main>

    <nav class="sheet-tabs">
        <div class="sheet-nav">
            <button aria-label="Primero" disabled><i class="tri-left"></i></button>
            <button aria-label="Anterior" disabled><i class="tri-left"></i></button>
            <button aria-label="Siguiente" disabled><i class="tri-right"></i></button>
            <button aria-label="Último" disabled><i class="tri-right"></i></button>
        </div>
        <button class="tab active">Modelo</button>
        <button class="tab">Vistas 3D</button>
        <button class="tab long">Estudio de movimiento 1</button>
    </nav>

    <footer class="status">
        <span class="edition">SOLIDWORKS Premium 2016 x64 Edition</span>
        <span class="cell">Completamente definida</span>
        <span class="cell slim"></span>
        <span class="cell">Editando Ensamblaje</span>
        <span class="cell blank"></span>
        <button class="units">MMGS<i class="tri-up"></i></button>
        <svg class="icon"><use href="#i-tag"/></svg>
    </footer>
</body>
</html>
```

FILE: styles.css
```css
* {
    box-sizing: border-box;
}
body {
    margin: 0;
    height: 100vh;
    display: flex;
    flex-direction: column;
    overflow: hidden;
    background: #f7f7f7;
    color: #1a1a1a;
    font-family: "Noto Sans", "Open Sans", sans-serif;
    font-size: 11px;
    line-height: 13px;
}
button {
    display: flex;
    align-items: center;
    justify-content: center;
    margin: 0;
    padding: 0;
    border: none;
    background: none;
    color: inherit;
    font: inherit;
}
.sprite {
    position: absolute;
}
.icon {
    width: 20px;
    height: 20px;
    flex: none;
}
.icon-sm {
    width: 14px;
    height: 14px;
    flex: none;
}
.tri, .tri-right, .tri-left, .tri-up {
    width: 0;
    height: 0;
    flex: none;
    border: 3px solid transparent;
}
.tri {
    border-top: 4px solid #333;
    border-bottom: none;
}
.tri-up {
    border-bottom: 4px solid #333;
    border-top: none;
}
.tri-right {
    border-left: 4px solid #444;
    border-right: none;
}
.tri-left {
    border-right: 4px solid #444;
    border-left: none;
}

/* title bar */
.titlebar {
    display: flex;
    align-items: center;
    height: 31px;
    flex: none;
    border-bottom: 1px solid #77797c;
    font-family: "Open Sans", sans-serif;
}
.logo {
    align-self: flex-start;
    display: flex;
    align-items: center;
    gap: 3px;
    width: 144px;
    height: 34px;
    margin-left: 8px;
    padding: 0 4px 4px;
    border: 1px solid #9a9a9a;
    border-top: none;
    background: linear-gradient(#fff 60%, #e2e2e4);
    color: #c8403a;
    z-index: 1;
}
.logo-mark {
    width: 32px;
    height: 30px;
    flex: none;
}
.logo-text {
    padding-top: 9px;
    font-size: 16px;
    font-style: italic;
}
.menu-open {
    width: 22px;
    height: 30px;
    border-right: 1px solid #77797c;
}
.menu-open .tri-right {
    border-width: 7px;
    border-left-width: 8px;
    border-right-width: 0;
    border-left-color: #666;
}
.quick {
    display: flex;
    align-items: center;
    margin-left: 29px;
}
.quick .more {
    width: 19px;
}
.quick .wide {
    width: 25px;
}
.quick button:disabled .tri {
    opacity: 0.4;
}
.pick {
    width: 26px;
    height: 26px;
    background: #a3a9b2;
    border: 1px solid #6d7f92;
}
.pick-more {
    width: 13px;
    height: 26px;
    border: 1px solid #a9b0b8;
    border-left: none;
}
.doc-title {
    flex: 1;
    margin: 0;
    text-align: center;
    font-size: 11px;
    font-weight: normal;
}
.search {
    display: flex;
    align-items: center;
    gap: 4px;
    width: 252px;
    height: 22px;
    padding: 0 3px 0 4px;
    border: 1px solid #b4b4b4;
}
.search input {
    flex: 1;
    min-width: 0;
    padding: 0;
    border: none;
    background: none;
    font: inherit;
}
.search input::placeholder {
    color: #555;
    opacity: 1;
}
.search .tri {
    border-top-color: #777;
}
.win-controls {
    display: flex;
    align-items: center;
    gap: 12px;
    padding: 0 4px 0 12px;
    color: #555;
}
.help {
    font-size: 18px;
    font-weight: 600;
}

/* command ribbon */
.ribbon {
    display: flex;
    height: 87px;
    flex: none;
    padding: 6px 0 2px;
    border-bottom: 1px solid #77797c;
    font-family: "Open Sans", sans-serif;
}
.group {
    display: flex;
    padding: 0 1px;
    border-right: 1px solid #c4c4c4;
}
.group:first-child {
    padding-left: 0;
}
.group.snug {
    padding: 0;
}
.group.wide {
    gap: 3px;
}
.group.last {
    border-right: none;
}
.cmd {
    flex-direction: column;
    justify-content: flex-start;
    padding: 12px 5px 0;
    text-align: center;
    white-space: nowrap;
}
.cmd.drop {
    padding-top: 5px;
}
.cmd .tri {
    margin-top: 13px;
}
.cmd:disabled {
    color: #b4b4b4;
}
.cmd:disabled .icon {
    opacity: 0.4;
    filter: grayscale(1);
}
.cmd.pressed {
    background: #a9abad;
    outline: 1px solid #64788a;
    outline-offset: -1px;
}

/* work area */
.workspace {
    flex: 1;
    min-height: 0;
    display: grid;
    grid-template-columns: 415px 1fr;
    grid-template-rows: 22px 1fr;
    background: #c5c7d3;
}
.cmd-tabs {
    grid-column: 1 / 3;
    grid-row: 1;
    display: flex;
    justify-self: start;
    z-index: 1;
}
.cmd-tabs button {
    padding: 0 9px;
    background: #d2d2d2;
    border-right: 1px solid #808285;
    border-bottom: 1px solid #808285;
}
.cmd-tabs .active {
    padding: 0 5px;
    background: #f7f7f7;
    border-bottom-color: #f7f7f7;
    font-weight: 600;
}
.panel {
    position: relative;
    grid-column: 1;
    grid-row: 2;
    display: flex;
    flex-direction: column;
    min-width: 0;
    min-height: 0;
    background: #f7f7f7;
    border-right: 1px solid #85878e;
}
.splitter {
    display: flex;
    justify-content: center;
    align-items: center;
    height: 16px;
    margin: 2px 5px 4px 0;
    border-top: 1px solid #bbb;
    border-bottom: 1px solid #ccc;
    flex: none;
}
.knob {
    width: 6px;
    height: 6px;
    border: 1px solid #999;
    border-radius: 50%;
    background: #ccc;
}
.panel-tabs {
    display: flex;
    height: 26px;
    margin-right: 3px;
    border-bottom: 1px solid #999;
    flex: none;
}
.panel-tabs button {
    width: 40px;
    background: #d2d2d2;
    border: 1px solid #999;
    border-width: 1px 1px 0 0;
}
.panel-tabs .active {
    width: 37px;
    background: #f7f7f7;
    margin-bottom: -1px;
}
.panel-tabs .expand {
    width: 16px;
    margin-left: auto;
    background: none;
    border: none;
}
.filter {
    display: flex;
    align-items: center;
    height: 24px;
    margin-right: 3px;
    padding: 1px 0 0 2px;
    border: 1px solid #c0c0c0;
    border-top: none;
    flex: none;
}
.filter .icon {
    width: 18px;
    height: 18px;
}
.filter .tri {
    margin-top: 6px;
}
.tree {
    margin: 0 2px 0 0;
    padding: 0;
    list-style: none;
    overflow: hidden;
    border-bottom: 3px solid #2d5f7c;
    flex: none;
}
.tree li {
    position: relative;
    display: flex;
    align-items: center;
    gap: 5px;
    height: 22px;
    padding-left: 22px;
    white-space: nowrap;
}
.tree .root {
    padding-left: 0;
    gap: 4px;
}
.tree .icon {
    width: 18px;
    height: 18px;
}
.has-kids::before {
    content: "";
    position: absolute;
    left: 5px;
    border: 4px solid transparent;
    border-left-color: #555;
    border-right: none;
}
.hscroll {
    display: flex;
    height: 15px;
    margin: auto 2px 3px 0;
    background: #ececec;
    flex: none;
}
.hscroll button {
    width: 14px;
    flex: none;
}
.track {
    flex: 1;
}
.thumb {
    display: flex;
    align-items: center;
    justify-content: center;
    gap: 2px;
    width: 54%;
    height: 15px;
    border: 1px solid #999;
    border-radius: 1px;
    background: linear-gradient(#f6f6f6, #cfcfd3);
}
.thumb i {
    width: 1px;
    height: 6px;
    background: #555;
}
.handle {
    position: absolute;
    right: -8px;
    top: 403px;
    display: flex;
    align-items: center;
    justify-content: flex-end;
    width: 9px;
    height: 38px;
    background: #f7f7f7;
    border: 1px solid #a5a7ae;
    border-left: none;
    z-index: 2;
}
.pointer {
    position: absolute;
    left: 27px;
    bottom: 54px;
    width: 14px;
    height: 20px;
}

/* graphics area */
.viewport {
    position: relative;
    grid-column: 2;
    grid-row: 1 / 3;
    min-width: 0;
    min-height: 0;
}
.model {
    display: block;
    width: 100%;
    height: 100%;
}
.edge {
    stroke: #15151c;
    stroke-width: 1;
    stroke-linejoin: round;
}
.sky {
    fill: #c5c7d3;
    stroke: none;
}
.axes text {
    font: 14px "Open Sans", sans-serif;
}
.watermark {
    fill: #fff;
    opacity: 0.7;
    filter: drop-shadow(1px 2px 0 #555);
}
.wm-cjk {
    font: 300 78px "Noto Sans CJK SC", sans-serif;
}
.wm-latin {
    font: 68px "Liberation Serif", serif;
}
.hud {
    position: absolute;
    top: 5px;
    left: 0;
    right: 4px;
    display: flex;
    align-items: center;
    justify-content: center;
    gap: 6px;
}
.hud .tri {
    margin: 0 1px;
    border-top-color: #7d7f88;
}
.doc-controls {
    position: absolute;
    top: 8px;
    right: 12px;
    display: flex;
    gap: 12px;
    color: #85878f;
}
.taskpane {
    position: absolute;
    top: 44px;
    right: 0;
    border: 1px solid #808285;
    border-right: none;
}
.taskpane button {
    width: 23px;
    height: 24px;
    background: #d2d2d2;
    border-bottom: 1px solid #999;
}
.taskpane .active {
    background: #f7f7f7;
}
.taskpane .icon {
    width: 18px;
    height: 18px;
}

/* bottom tabs and status bar */
.sheet-tabs {
    display: flex;
    height: 16px;
    flex: none;
    border-top: 1px solid #77797c;
    border-bottom: 1px solid #77797c;
}
.sheet-nav {
    display: flex;
    width: 64px;
    background: #a4a4a4;
}
.sheet-nav button {
    flex: 1;
    border-right: 1px solid #8c8c8c;
    opacity: 0.5;
}
.tab {
    padding: 0 9px 2px;
    background: #d2d2d2;
    border-right: 1px solid #999;
}
.tab.active {
    padding: 0 10px 2px 12px;
    background: #f7f7f7;
    font-weight: bold;
}
.tab.long {
    padding: 0 22px 2px 10px;
}
.status {
    display: flex;
    align-items: center;
    height: 18px;
    flex: none;
}
.edition {
    flex: 1;
    margin-left: -1px;
}
.cell {
    height: 13px;
    padding: 0 6px 0 4px;
    border-right: 1px solid #ccc;
}
.cell.slim {
    width: 8px;
    padding: 0;
}
.cell.blank {
    width: 16px;
    padding: 0;
}
.units {
    justify-content: space-between;
    width: 82px;
    margin: 0 66px 0 54px;
}
.status .icon {
    width: 18px;
    height: 16px;
}
```
